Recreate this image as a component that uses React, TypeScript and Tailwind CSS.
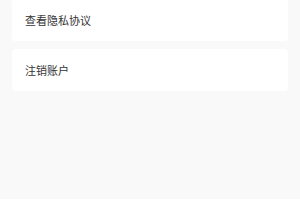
export default function App() {
  const items = ["查看隐私协议", "注销账户"];
  return (
    <div
      className="min-h-[200px] w-full bg-[#f9f9f9] px-3"
      style={{ fontFamily: '"Noto Sans CJK SC", "Noto Sans", sans-serif' }}
    >
      <div className="-mt-px flex flex-col gap-2">
        {items.map((label) => (
          <div key={label} className="flex h-[42px] items-center rounded bg-white px-[13px]">
            <span className="text-[11px] text-[#333333]">{label}</span>
          </div>
        ))}
      </div>
    </div>
  );
}
